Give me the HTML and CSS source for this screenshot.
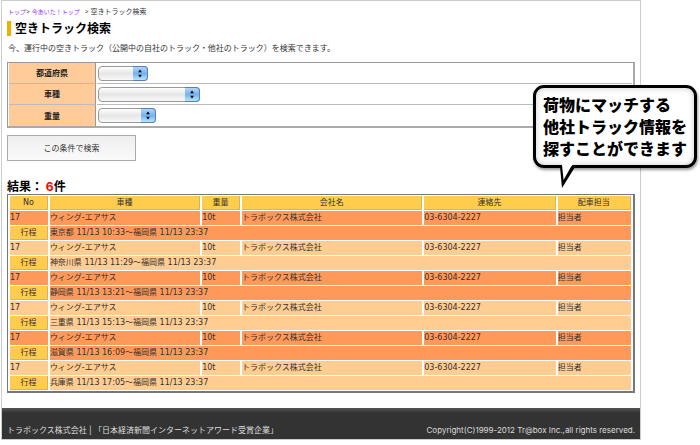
FILE: index.html
```html
<!DOCTYPE html>
<html lang="ja">

<head>
    <meta charset="UTF-8">
    <meta name="viewport" content="width=device-width, initial-scale=1.0">
    <title>空きトラック検索</title>
    <link rel="stylesheet" href="styles.css">
</head>

<body>
    <div class="page">
        <div class="content">
            <nav class="breadcrumb">
                <a href="#">トップ</a>&gt; <a href="#">今あいた！トップ</a> &nbsp;&nbsp;&gt; <span class="current">空きトラック検索</span>
            </nav>
            <h1>空きトラック検索</h1>
            <p class="lead">今、運行中の空きトラック（公開中の自社のトラック・他社のトラック）を検索できます。</p>

            <form>
                <table class="search-table">
                    <tr>
                        <th><label for="pref">都道府県</label></th>
                        <td>
                            <span class="select-box select-pref">
                                <select id="pref"><option></option></select>
                                <svg viewBox="0 0 15 15"><path d="M7.5 3L9.7 6H5.3zM7.5 12L5.3 9H9.7z"/></svg>
                            </span>
                        </td>
                    </tr>
                    <tr>
                        <th><label for="type">車種</label></th>
                        <td>
                            <span class="select-box select-type">
                                <select id="type"><option></option></select>
                                <svg viewBox="0 0 15 15"><path d="M7.5 3L9.7 6H5.3zM7.5 12L5.3 9H9.7z"/></svg>
                            </span>
                        </td>
                    </tr>
                    <tr>
                        <th><label for="weight">重量</label></th>
                        <td>
                            <span class="select-box select-weight">
                                <select id="weight"><option></option></select>
                                <svg viewBox="0 0 15 15"><path d="M7.5 3L9.7 6H5.3zM7.5 12L5.3 9H9.7z"/></svg>
                            </span>
                        </td>
                    </tr>
                </table>
                <button type="button" class="search-button">この条件で検索</button>
            </form>

            <h2>結果： <span class="count">6</span>件</h2>
            <table class="result-table">
                <colgroup>
                    <col class="col-no">
                    <col class="col-type">
                    <col class="col-weight">
                    <col class="col-company">
                    <col class="col-tel">
                    <col class="col-person">
                </colgroup>
                <tr><th>No</th><th>車種</th><th>重量</th><th>会社名</th><th>連絡先</th><th>配車担当</th></tr>
                <tr class="odd"><td>17</td><td>ウィング-エアサス</td><td>10t</td><td>トラボックス株式会社</td><td>03-6304-2227</td><td>担当者</td></tr>
                <tr class="odd"><th>行程</th><td colspan="5">東京都 11/13 10:33～福岡県 11/13 23:37</td></tr>
                <tr class="even"><td>17</td><td>ウィング-エアサス</td><td>10t</td><td>トラボックス株式会社</td><td>03-6304-2227</td><td>担当者</td></tr>
                <tr class="even"><th>行程</th><td colspan="5">神奈川県 11/13 11:29～福岡県 11/13 23:37</td></tr>
                <tr class="odd"><td>17</td><td>ウィング-エアサス</td><td>10t</td><td>トラボックス株式会社</td><td>03-6304-2227</td><td>担当者</td></tr>
                <tr class="odd"><th>行程</th><td colspan="5">静岡県 11/13 13:21～福岡県 11/13 23:37</td></tr>
                <tr class="even"><td>17</td><td>ウィング-エアサス</td><td>10t</td><td>トラボックス株式会社</td><td>03-6304-2227</td><td>担当者</td></tr>
                <tr class="even"><th>行程</th><td colspan="5">三重県 11/13 15:13～福岡県 11/13 23:37</td></tr>
                <tr class="odd"><td>17</td><td>ウィング-エアサス</td><td>10t</td><td>トラボックス株式会社</td><td>03-6304-2227</td><td>担当者</td></tr>
                <tr class="odd"><th>行程</th><td colspan="5">滋賀県 11/13 16:09～福岡県 11/13 23:37</td></tr>
                <tr class="even"><td>17</td><td>ウィング-エアサス</td><td>10t</td><td>トラボックス株式会社</td><td>03-6304-2227</td><td>担当者</td></tr>
                <tr class="even"><th>行程</th><td colspan="5">兵庫県 11/13 17:05～福岡県 11/13 23:37</td></tr>
            </table>
        </div>

        <footer class="footer">
            <span>トラボックス株式会社 | 「日本経済新聞インターネットアワード受賞企業」</span>
            <span>Copyright(C)1999-2012 Tr@box Inc.,all rights reserved.</span>
        </footer>
    </div>

    <div class="callout">
        荷物にマッチする<br>
        他社トラック情報を<br>
        探すことができます
        <svg class="callout-tail" viewBox="0 0 16 24"><path class="tail-line" d="M0 0V2L2 23L15 2V0z"/><path class="tail-fill" d="M2 0L3.6 15L12 0z"/><path class="tail-fill" d="M2 -3H13L12 1H2z"/></svg>
    </div>
</body>

</html>
```
FILE: styles.css
```css
* {
    box-sizing: border-box;
}

body {
    position: relative;
    margin: 0;
    background-color: #fff;
    color: #333;
    font-family: Inter, "Noto Sans CJK JP", sans-serif;
    font-size: 8px;
    line-height: 12px;
}

.page {
    margin: 0 59px 0 1px;
    border: 1px solid #ccc;
}

.content {
    padding: 5px 5px 15px;
}

.breadcrumb {
    padding-left: 1px;
    font-size: 6px;
}

.breadcrumb a {
    color: #93f;
    text-decoration: none;
}

.breadcrumb .current {
    font-size: 7px;
}

h1,
h2 {
    margin: 0;
    color: #000;
    font-size: 12px;
    line-height: 15px;
}

h1 {
    margin-top: 3px;
    padding-left: 4px;
    border-left: 4px solid #f0b000;
}

.lead {
    margin: 6px 0 8px;
    padding-left: 1px;
}

/* Search form */
.search-table {
    width: 100%;
    border: 1px solid #999;
    border-right: 2px solid #aaa;
    border-bottom: 2px solid #aaa;
    border-spacing: 1px 0;
}

.search-table th,
.search-table td {
    height: 21px;
    padding: 0 1px;
    border-bottom: 1px solid #bbb;
}

.search-table th {
    width: 87px;
    background-color: #fc9;
    border-right: 1px solid #999;
    color: #222;
}

.search-table tr:last-child th,
.search-table tr:last-child td {
    border-bottom: none;
}

.select-box {
    position: relative;
    display: block;
    height: 15px;
}

.select-box select {
    display: block;
    width: 100%;
    height: 100%;
    padding: 0;
    appearance: none;
    border: 1px solid #999;
    border-radius: 4px;
    background: linear-gradient(#fff, #e6e6e6 50%, #f8f8f8);
}

.select-box svg {
    position: absolute;
    top: 0;
    right: 0;
    width: 15px;
    height: 15px;
    border: 1px solid #5b7fb8;
    border-left: none;
    border-radius: 0 4px 4px 0;
    background: linear-gradient(#b5d5f8, #72b2ee 50%, #b4e6ff);
    pointer-events: none;
}

.select-pref {
    width: 50px;
}

.select-type {
    width: 102px;
}

.select-weight {
    width: 58px;
}

.search-button {
    display: block;
    width: 129px;
    height: 26px;
    margin: 7px 0 18px;
    padding: 0;
    border: 1px solid #aaa;
    background: linear-gradient(#eee, #fafafa);
    color: #333;
    font: inherit;
}

/* Results */
.count {
    color: #f00;
}

.result-table {
    width: 100%;
    table-layout: fixed;
    border: 1px solid #777;
    border-right: 2px solid #777;
    border-bottom: 2px solid #777;
    border-spacing: 2px 1px;
    font-family: "DejaVu Sans", "Noto Sans CJK JP", sans-serif;
}

.result-table th,
.result-table td {
    height: 14px;
    padding: 0;
    line-height: 12px;
    white-space: nowrap;
}

.result-table th {
    background-color: #ffcc4d;
    border-right: 1px solid #d9b45a;
    border-bottom: 1px solid #d9b45a;
    font-weight: normal;
}

.odd td {
    background-color: #ff9959;
}

.even td {
    background-color: #ffcc91;
}

.col-no,
.col-weight {
    width: 6.2%;
}

.col-type {
    width: 24.6%;
}

.col-company {
    width: 29.5%;
}

.col-tel {
    width: 21.5%;
}

.col-person {
    width: 12%;
}

/* Footer */
.footer {
    display: flex;
    justify-content: space-between;
    padding: 16px 5px 3px;
    background: linear-gradient(#555, #333 5px);
    color: #ddd;
}

/* Speech bubble over the page */
.callout {
    position: absolute;
    top: 85px;
    right: 3px;
    padding: 6px 7px 5px;
    border: 3px solid #000;
    border-radius: 11px;
    background-color: #fff;
    box-shadow: 1px 2px 3px rgba(0, 0, 0, 0.4), inset 0 0 6px #ccc;
    color: #000;
    font-size: 16px;
    font-weight: 900;
    line-height: 22px;
    white-space: nowrap;
}

.callout-tail {
    position: absolute;
    top: 100%;
    left: 24px;
    width: 16px;
    height: 24px;
    overflow: visible;
}

.tail-line {
    fill: #000;
}

.tail-fill {
    fill: #fff;
}
```
